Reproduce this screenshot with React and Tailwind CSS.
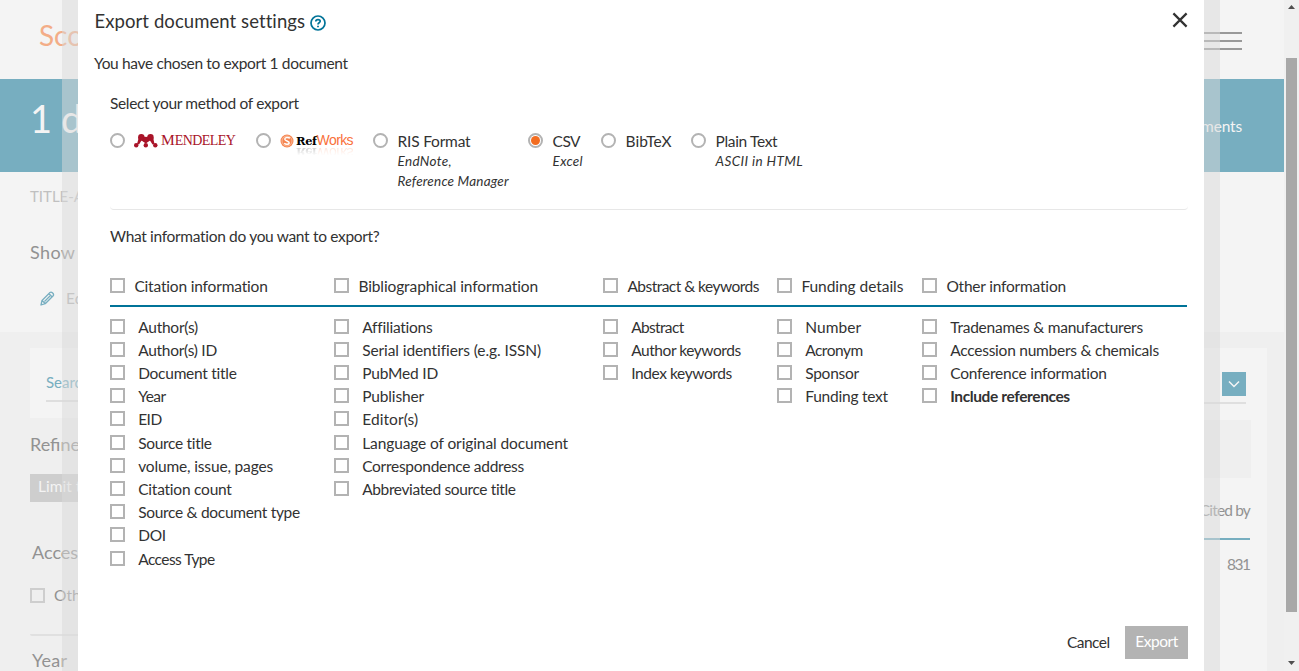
import { useLayoutEffect, useRef } from "react";

// Single-line text tracked to an exact rendered width.
function T({ w, className = "", children }) {
  const ref = useRef(null);
  useLayoutEffect(() => {
    const el = ref.current;
    if (!w || !el) return;
    el.style.letterSpacing = "0px";
    const natural = el.getBoundingClientRect().width;
    const n = String(children).length - 1;
    el.style.letterSpacing = `${(w - natural) / n}px`;
  }, [w, children]);
  return (
    <span ref={ref} className={`inline-block whitespace-nowrap ${className}`}>
      {children}
    </span>
  );
}

const GROUPS = [
  {
    title: ["Citation information", 134], width: "w-[224px]",
    items: [["Author(s)", 60], ["Author(s) ID", 79], ["Document title", 99], ["Year", 28], ["EID", 24], ["Source title", 74], ["volume, issue, pages", 135], ["Citation count", 94], ["Source & document type", 162], ["DOI", 28], ["Access Type", 77]],
  },
  {
    title: ["Bibliographical information", 180], width: "w-[269px]",
    items: [["Affiliations", 70], ["Serial identifiers (e.g. ISSN)", 179], ["PubMed ID", 76], ["Publisher", 62], ["Editor(s)", 56], ["Language of original document", 206], ["Correspondence address", 162], ["Abbreviated source title", 154]],
  },
  {
    title: ["Abstract & keywords", 132], width: "w-[174px]",
    items: [["Abstract", 53], ["Author keywords", 110], ["Index keywords", 101]],
  },
  {
    title: ["Funding details", 102], width: "w-[145px]",
    items: [["Number", 56], ["Acronym", 58], ["Sponsor", 54], ["Funding text", 83]],
  },
  {
    title: ["Other information", 120], width: "w-[265px]",
    items: [["Tradenames & manufacturers", 193], ["Accession numbers & chemicals", 209], ["Conference information", 157], ["Include references", 120, true]],
  },
];

const Box = () => <span className="h-[15px] w-[15px] shrink-0 border-2 border-[#b3b3b3] bg-white" />;

function Radio({ checked }) {
  return (
    <span className="mt-[2px] flex h-[15px] w-[15px] shrink-0 items-center justify-center rounded-full border-2 border-[#b3b3b3]">
      {checked && <span className="h-[9px] w-[9px] rounded-full bg-[#f36d21]" />}
    </span>
  );
}

function Mendeley() {
  return (
    <span className="ml-[9px] flex h-5 items-center text-[#a91429]">
      <svg width="24" height="14" viewBox="0 0 24 14" fill="currentColor">
        <path d="M5 3 7 .5 11 3h2L17 .5 19 3l1.500 7-2 .5L16 6.500 12.500 9h-1.400L7.500 6.500 5 10.500l-2-.5z" />
        <circle cx="7.300" cy="3.200" r="3.200" /><circle cx="16.500" cy="3.200" r="3.200" />
        <circle cx="2.200" cy="11.300" r="2.200" /><circle cx="11.800" cy="11.300" r="2.200" /><circle cx="21.300" cy="11.300" r="2.200" />
        <circle cx="11.900" cy="5.500" r="2.700" />
      </svg>
      <span className="ml-[3px] flex items-baseline pb-px font-['Liberation_Serif',serif] leading-5">
        <span className="text-[15.5px]">M</span><T w={61} className="text-[14px]">ENDELEY</T>
      </span>
    </span>
  );
}

function RefWords() {
  return (
    <span className="flex items-baseline leading-[14px]">
      <T w={21} className="font-['DejaVu_Serif',serif] text-[11.5px] font-bold text-black">Ref</T>
      <T w={37} className="font-['Liberation_Sans',sans-serif] text-[14px] text-[#f9713a]">Works</T>
    </span>
  );
}

function RefWorks() {
  return (
    <span className="ml-[9px] flex h-5 items-start pt-[2px]">
      <svg width="14" height="14" viewBox="0 0 14 14" className="mt-px">
        <circle cx="7" cy="7" r="6.500" fill="#f58551" />
        <circle cx="7" cy="7" r="5" fill="none" stroke="#fbc4a6" strokeWidth=".8" />
        <path d="M10 4.200C8 2.800 4.600 3.300 4.800 5.300 5 7.200 9.500 6.800 9.200 9c-.3 1.700-3.500 1.700-5 .3" fill="none" stroke="#fff" strokeWidth="1.500" />
      </svg>
      <span className="ml-[2px] flex flex-col">
        <RefWords />
        <span aria-hidden="true" className="-mt-[3px] -scale-y-100 opacity-25 [mask-image:linear-gradient(to_top,black,transparent_70%)]">
          <RefWords />
        </span>
      </span>
    </span>
  );
}

function Method({ width, label, labelW, notes = [], checked, children }) {
  return (
    <label className={`flex ${width}`}>
      <Radio checked={checked} />
      {children || (
        <span className="ml-[9.6px] flex flex-col items-start">
          <T w={labelW} className="leading-5">{label}</T>
          {notes.map(([t, w]) => (
            <T key={t} w={w} className="text-[13.5px] italic leading-5">{t}</T>
          ))}
        </span>
      )}
    </label>
  );
}

function Dialog() {
  return (
    <section className="flex h-full w-[1126px] flex-col bg-white pl-4 pr-4 text-[15.5px] text-[#323232]">
      <header className="flex h-[53px] items-start justify-between">
        <h1 className="flex pt-[11px]">
          <T w={210} className="ml-[0.5px] text-[18.5px] leading-[21px]">Export document settings</T>
          <svg width="16" height="16" viewBox="0 0 16 16" className="ml-[5px] mt-[4px]" fill="none" stroke="#007398">
            <circle cx="8" cy="8" r="7" strokeWidth="1.7" />
            <path d="M5.8 6.4C5.8 4 10.2 4 10.2 6.3 10.2 7.8 8 7.7 8 9.4" strokeWidth="1.7" />
            <path d="M8 10.7v1.6" strokeWidth="1.8" />
          </svg>
        </h1>
        <svg width="16" height="16" viewBox="0 0 16 16" className="mt-[12px]" stroke="#323232" strokeWidth="2.2">
          <path d="M1.4 1.4 14.6 14.6M14.6 1.4 1.4 14.6" />
        </svg>
      </header>
      <p className="h-[40px] leading-5"><T w={254}>You have chosen to export 1 document</T></p>
      <div className="ml-4 flex flex-col">
        <p className="h-[38px] leading-5"><T w={189}>Select your method of export</T></p>
        <div className="flex h-[79px] w-[1078px] rounded-b border-b border-[#e7e7e7]">
          <Method width="w-[146px]"><Mendeley /></Method>
          <Method width="w-[117px]"><RefWorks /></Method>
          <Method width="w-[155px]" label="RIS Format" labelW={73} notes={[["EndNote,", 54], ["Reference Manager", 111]]} />
          <Method width="w-[73px]" label="CSV" labelW={28} notes={[["Excel", 30]]} checked />
          <Method width="w-[90px]" label="BibTeX" labelW={46} />
          <Method width="w-[120px]" label="Plain Text" labelW={62} notes={[["ASCII in HTML", 87]]} />
        </div>
        <p className="mt-[16px] h-[50px] leading-5"><T w={270}>What information do you want to export?</T></p>
        <div className="flex h-[31px] w-[1077px] items-start border-b-2 border-[#007398]">
          {GROUPS.map((g) => (
            <label key={g.title[0]} className={`flex items-start shrink-0 ${g.width}`}>
              <span className="flex pt-[2px]"><Box /></span>
              <T w={g.title[1]} className="ml-[9.4px] leading-5">{g.title[0]}</T>
            </label>
          ))}
        </div>
        <div className="flex pt-[7.65px]">
          {GROUPS.map((g) => (
            <div key={g.title[0]} className={`flex shrink-0 flex-col ${g.width}`}>
              {g.items.map(([t, w, bold]) => (
                <label key={t} className="flex h-[23.2px] items-start">
                  <span className="flex pt-[4px]"><Box /></span>
                  <T w={w} className={bold ? "ml-[13.2px] font-bold leading-[24px]" : "ml-[13.2px] leading-[24px]"}>{t}</T>
                </label>
              ))}
            </div>
          ))}
        </div>
      </div>
      <footer className="mb-3 mt-auto flex items-center justify-end">
        <T w={43}>Cancel</T>
        <button className="ml-[15.5px] flex h-[33px] w-[63px] items-center justify-center bg-[#b3b3b3] pb-[2px] text-white"><T w={43}>Export</T></button>
      </footer>
    </section>
  );
}

function Background() {
  return (
    <div className="flex h-full w-[1284px] flex-col text-[#929292]">
      <div className="flex h-[79px] items-start justify-between bg-[#f4f4f4] pl-[39px] pr-[42px]">
        <span className="mt-[17px] text-[28px] leading-[36px] text-[#f3ad87]">Scopus</span>
        <span className="mt-[32px] flex w-10 flex-col gap-[6px]">
          <i className="h-[2px] bg-[#999]" /><i className="h-[2px] bg-[#999]" /><i className="h-[2px] bg-[#999]" />
        </span>
      </div>
      <div className="flex h-[93px] items-start justify-between bg-[#77aec0] pl-[30px] pr-[42px] text-[#f4f4f4]">
        <span className="mt-[17px] whitespace-nowrap text-[38px] leading-[44px] tracking-[-0.4px]">1 document</span>
        <T w={74} className="mt-[37px] text-[15.5px] leading-5">documents</T>
      </div>
      <div className="flex h-[160px] flex-col items-start bg-[#f4f4f4] pl-[30px]">
        <span className="mt-[14px] whitespace-nowrap text-[15px] leading-5 text-[#c0c0c0]">TITLE-ABS</span>
        <T w={45} className="mt-[36px] text-[18px] leading-5">Show</T>
        <span className="mt-[26px] flex items-center pl-[10px] text-[15.5px] leading-5 text-[#b0b0b0]">
          <svg width="15" height="15" viewBox="0 0 15 15" fill="none" stroke="#77aec0" strokeWidth="1.3" strokeLinejoin="round">
            <path d="M1 14l1-4.5 8-8c1.5-1.2 4.500 1.500 3.200 3.200l-8 8zM2 9.500l3.500 3.300M9 2.800l3.200 3.200M4.500 10.500 10 5" />
          </svg>
          <span className="ml-[11px]">Edit</span>
        </span>
      </div>
      <div className="flex flex-1 justify-between bg-[#efefef] pl-[30px] pr-[17px] pt-4">
        <aside className="flex w-[200px] flex-col items-start">
          <div className="h-[70px] w-full bg-[#f4f4f4] px-4 pt-[24px]">
            <div className="h-[30px] border-b-2 border-[#dedede] text-[15px] leading-5 text-[#77aec0]">Search</div>
          </div>
          <span className="mt-[16px] text-[18px] leading-5">Refine</span>
          <span className="mt-[20px] flex h-[28px] w-full items-center bg-[#cecece] pb-[2px] pl-[8px] text-[15.5px] text-[#f4f4f4]">Limit to</span>
          <span className="ml-[2px] mt-[40px] text-[18px] leading-5">Access</span>
          <span className="mt-[23px] flex h-5 items-center text-[15.5px]">
            <i className="mr-[9px] h-[15px] w-[15px] border-2 border-[#cecece]" /><span className="pt-[2px]">Other</span>
          </span>
          <span className="mt-[29px] h-[2px] w-full rounded-b bg-[#e0e0e0]" />
          <T w={35} className="ml-[2px] mt-[14px] text-[18px] leading-5">Year</T>
        </aside>
        <main className="flex w-[200px] flex-col items-end bg-[#f4f4f4] px-4 pt-6 text-[15.5px]">
          <div className="mr-[5px] flex h-8 w-[150px] justify-end border-b-2 border-[#dfdfdf]">
            <span className="flex h-6 w-6 items-center justify-center bg-[#77aec0]">
              <svg width="12" height="8" viewBox="0 0 12 8" fill="none" stroke="#f4f4f4" strokeWidth="1.5"><path d="M1 1.500 6 6.500 11 1.500" /></svg>
            </span>
          </div>
          <div className="mt-[16px] h-[58px] w-[150px] bg-[#efefef]" />
          <div className="mr-px mt-[22px] flex h-[40px] w-[150px] justify-end border-b-2 border-[#77aec0] leading-5"><T w={51}>Cited by</T></div>
          <T w={24} className="mr-[1.5px] mt-[14px] leading-5">831</T>
        </main>
      </div>
    </div>
  );
}

export default function App() {
  return (
    <div className="relative flex h-[671px] w-[1299px] overflow-hidden bg-[#f4f4f4] font-[Lato,sans-serif]">
      <Background />
      <div className="flex w-[15px] flex-col items-center justify-between bg-[#f0f0f0] pt-[5px] pb-[6px]">
        <svg width="7" height="4" viewBox="0 0 7 4" fill="#505050"><path d="M0 4 3.500 0 7 4z" /></svg>
        <span className="mb-auto mt-[49px] h-[554px] w-[11px] shrink-0 bg-[#a8a8a8]" />
        <svg width="7" height="4" viewBox="0 0 7 4" fill="#505050"><path d="M0 0h7L3.500 4z" /></svg>
      </div>
      <div className="absolute left-[62px] top-0 h-full bg-[rgba(218,218,218,0.5)] px-4">
        <Dialog />
      </div>
    </div>
  );
}
